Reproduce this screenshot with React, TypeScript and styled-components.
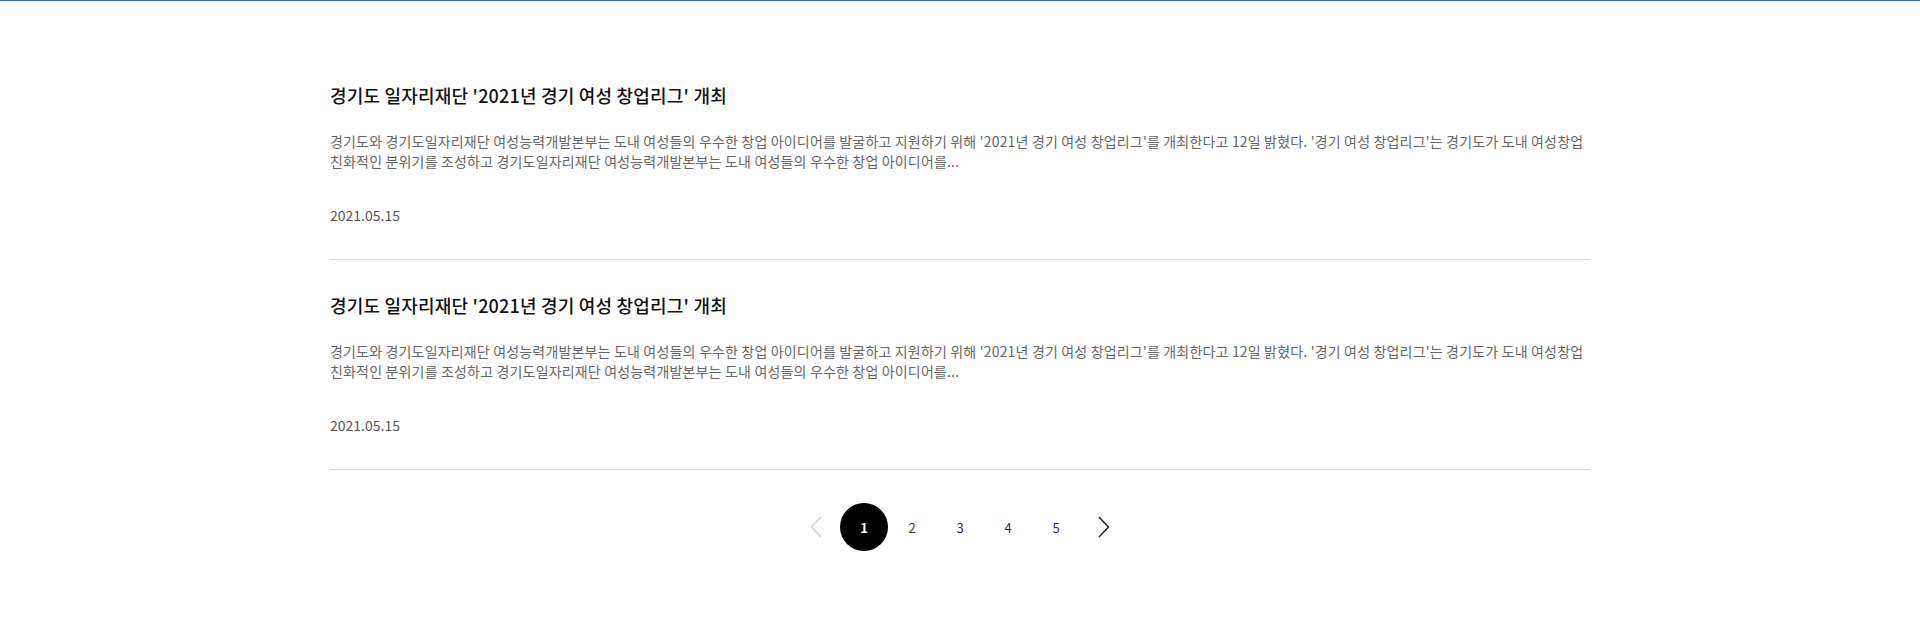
import React from "react";
import styled, { createGlobalStyle } from "styled-components";

const GlobalStyle = createGlobalStyle`
  * { box-sizing: border-box; }
  html, body { margin: 0; padding: 0; background: #fff; }
  body {
    font-family: "Noto Sans CJK KR", "Noto Sans", sans-serif;
    border-top: 1px solid #2a72c0;
  }
`;

const Page = styled.main`
  width: 1260px;
  margin: 0 auto;
  padding-top: 49px;
  padding-bottom: 60px;
`;

const List = styled.ul`
  list-style: none;
  margin: 0;
  padding: 0;
`;

const Item = styled.li`
  padding: 32px 0 33px;
  border-bottom: 1px solid #dddddd;
`;

const Title = styled.h3`
  margin: 0;
  font-size: 18px;
  line-height: 26px;
  font-weight: 500;
  letter-spacing: 0.2px;
  color: #111;
`;

const Desc = styled.p`
  margin: 23px 0 0;
  font-size: 14px;
  line-height: 20px;
  letter-spacing: 0.17px;
  word-break: keep-all;
  color: #666;
  font-weight: 400;
`;

const DateText = styled.div`
  margin-top: 34px;
  font-size: 14px;
  line-height: 21px;
  color: #555;
`;

const Pager = styled.nav`
  display: flex;
  justify-content: center;
  align-items: center;
  margin-top: 33px;
`;

const PageBtn = styled.button<{ $active?: boolean }>`
  width: 48px;
  height: 48px;
  border: 0;
  padding: 0;
  border-radius: 50%;
  display: flex;
  align-items: center;
  justify-content: center;
  font-family: "Noto Sans CJK KR", "Noto Sans", sans-serif;
  font-size: 13px;
  font-weight: ${(p) => (p.$active ? 700 : 400)};
  background: ${(p) => (p.$active ? "#000" : "transparent")};
  color: ${(p) => (p.$active ? "#fff" : "#333")};
  cursor: pointer;
`;

const ArrowBtn = styled.button<{ $disabled?: boolean }>`
  width: 48px;
  height: 48px;
  border: 0;
  padding: 0;
  background: transparent;
  display: flex;
  align-items: center;
  justify-content: center;
  color: ${(p) => (p.$disabled ? "#cfcfcf" : "#222")};
  cursor: pointer;
`;

const Chevron = ({ dir }: { dir: "left" | "right" }) => (
  <svg width="12" height="22" viewBox="0 0 12 22" fill="none">
    <path
      d={dir === "left" ? "M11 1 L1.5 11 L11 21" : "M1 1 L10.5 11 L1 21"}
      stroke="currentColor"
      strokeWidth="1.5"
    />
  </svg>
);

const articles = [
  {
    title: "경기도 일자리재단 '2021년 경기 여성 창업리그' 개최",
    desc:
      "경기도와 경기도일자리재단 여성능력개발본부는 도내 여성들의 우수한 창업 아이디어를 발굴하고 지원하기 위해 '2021년 경기 여성 창업리그'를 개최한다고 12일 밝혔다. '경기 여성 창업리그'는 경기도가 도내 여성창업 친화적인 분위기를 조성하고 경기도일자리재단 여성능력개발본부는 도내 여성들의 우수한 창업 아이디어를...",
    date: "2021.05.15",
  },
  {
    title: "경기도 일자리재단 '2021년 경기 여성 창업리그' 개최",
    desc:
      "경기도와 경기도일자리재단 여성능력개발본부는 도내 여성들의 우수한 창업 아이디어를 발굴하고 지원하기 위해 '2021년 경기 여성 창업리그'를 개최한다고 12일 밝혔다. '경기 여성 창업리그'는 경기도가 도내 여성창업 친화적인 분위기를 조성하고 경기도일자리재단 여성능력개발본부는 도내 여성들의 우수한 창업 아이디어를...",
    date: "2021.05.15",
  },
];

export default function App() {
  return (
    <>
      <GlobalStyle />
      <Page>
        <List>
          {articles.map((a, i) => (
            <Item key={i}>
              <Title>{a.title}</Title>
              <Desc>{a.desc}</Desc>
              <DateText>{a.date}</DateText>
            </Item>
          ))}
        </List>
        <Pager>
          <ArrowBtn $disabled aria-label="이전">
            <Chevron dir="left" />
          </ArrowBtn>
          {[1, 2, 3, 4, 5].map((n) => (
            <PageBtn key={n} $active={n === 1}>
              {n}
            </PageBtn>
          ))}
          <ArrowBtn aria-label="다음">
            <Chevron dir="right" />
          </ArrowBtn>
        </Pager>
      </Page>
    </>
  );
}
